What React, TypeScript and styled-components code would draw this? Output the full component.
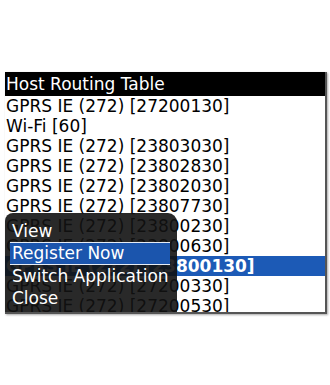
import React from 'react';
import styled, { createGlobalStyle } from 'styled-components';

const GlobalStyle = createGlobalStyle`
  html, body {
    margin: 0;
    padding: 0;
    background: #fff;
  }
  body {
    font-family: "DejaVu Sans", "Noto Sans", sans-serif;
  }
`;

const Page = styled.div`
  width: 330px;
  height: 385px;
  padding: 72px 0 0 5px;
  box-sizing: border-box;
  background: #fff;
`;

const Screen = styled.div`
  position: relative;
  width: 320px;
  height: 240px;
  overflow: hidden;
  background: #fff;
  border-right: 2px solid #555;
  border-bottom: 2px solid #555;
  box-shadow: 1px 1px 2px rgba(0, 0, 0, 0.35);
  font-size: 17px;
`;

const TitleBar = styled.div`
  height: 24px;
  line-height: 24px;
  padding-left: 1px;
  background: #000;
  color: #fff;
  white-space: nowrap;
`;

const Row = styled.div<{ $selected?: boolean }>`
  height: 20px;
  line-height: 20px;
  padding-left: 1px;
  white-space: nowrap;
  color: ${(p) => (p.$selected ? '#fff' : '#000')};
  background: ${(p) => (p.$selected ? '#1c5ab6' : 'transparent')};
  font-weight: ${(p) => (p.$selected ? 700 : 400)};
`;

// popup menu lies over the list, so it is placed absolutely
const Menu = styled.div`
  position: absolute;
  left: 0;
  top: 141px;
  bottom: 0;
  width: 172px;
  padding-top: 7px;
  box-sizing: border-box;
  background: rgba(18, 18, 18, 0.9);
  border-radius: 8px 9px 0 0;
  display: flex;
  flex-direction: column;
`;

const MenuItem = styled.div<{ $active?: boolean }>`
  height: ${(p) => (p.$active ? '21px' : '22px')};
  line-height: ${(p) => (p.$active ? '21px' : '22px')};
  margin: 0 7px 0 5px;
  padding-left: 2px;
  color: #fff;
  white-space: nowrap;
  background: ${(p) => (p.$active ? '#1b55ad' : 'transparent')};
  border-top: ${(p) => (p.$active ? '1px solid #e6ecf5' : 'none')};
  border-bottom: ${(p) => (p.$active ? '1px solid #e6ecf5' : 'none')};
`;

const routes = [
  'GPRS IE (272) [27200130]',
  'Wi-Fi [60]',
  'GPRS IE (272) [23803030]',
  'GPRS IE (272) [23802830]',
  'GPRS IE (272) [23802030]',
  'GPRS IE (272) [23807730]',
  'GPRS IE (272) [23800230]',
  'GPRS IE (272) [23800630]',
  'GPRS IE (272) [23800130]',
  'GPRS IE (272) [27200330]',
  'GPRS IE (272) [27200530]',
];

const menuItems = ['View', 'Register Now', 'Switch Application', 'Close'];

const App = () => {
  return (
    <Page>
      <GlobalStyle />
      <Screen>
        <TitleBar>Host Routing Table</TitleBar>
        {routes.map((r, i) => (
          <Row key={i} $selected={i === 8}>
            {r}
          </Row>
        ))}
        <Menu>
          {menuItems.map((m) => (
            <MenuItem key={m} $active={m === 'Register Now'}>
              {m}
            </MenuItem>
          ))}
        </Menu>
      </Screen>
    </Page>
  );
};

export default App;
